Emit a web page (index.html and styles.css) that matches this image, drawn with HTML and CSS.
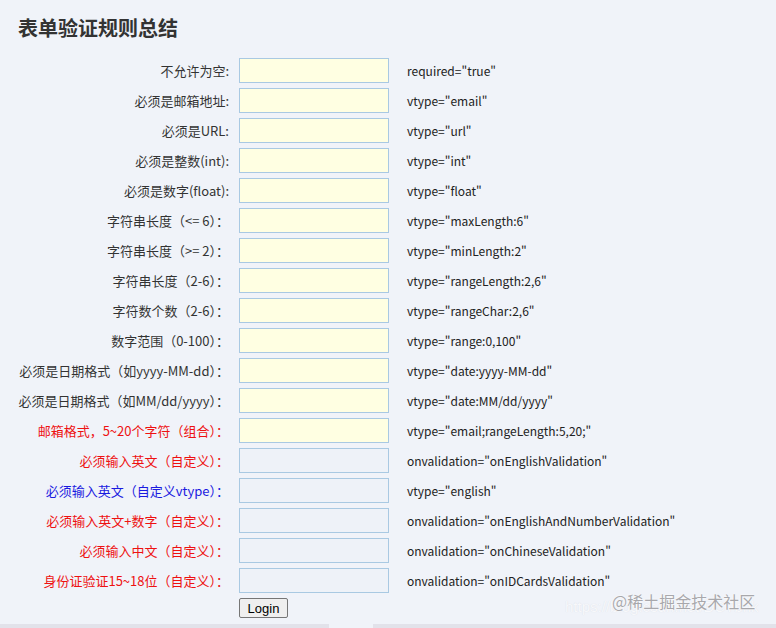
FILE: index.html
```html
<!DOCTYPE html>
<html lang="zh-CN">
<head>
<meta charset="utf-8">
<title>表单验证规则总结</title>
<link rel="stylesheet" href="styles.css">
</head>
<body>
<div class="page">
  <h2 class="title">表单验证规则总结</h2>
  <form class="form">
    <label class="lbl">不允许为空:</label><span class="inp"></span><span class="rule">required="true"</span>
    <label class="lbl">必须是邮箱地址:</label><span class="inp"></span><span class="rule">vtype="email"</span>
    <label class="lbl">必须是URL:</label><span class="inp"></span><span class="rule">vtype="url"</span>
    <label class="lbl">必须是整数(int):</label><span class="inp"></span><span class="rule">vtype="int"</span>
    <label class="lbl">必须是数字(float):</label><span class="inp"></span><span class="rule">vtype="float"</span>
    <label class="lbl">字符串长度（&lt;= 6）：</label><span class="inp"></span><span class="rule">vtype="maxLength:6"</span>
    <label class="lbl">字符串长度（&gt;= 2）：</label><span class="inp"></span><span class="rule">vtype="minLength:2"</span>
    <label class="lbl">字符串长度（2-6）：</label><span class="inp"></span><span class="rule">vtype="rangeLength:2,6"</span>
    <label class="lbl">字符数个数（2-6）：</label><span class="inp"></span><span class="rule">vtype="rangeChar:2,6"</span>
    <label class="lbl">数字范围（0-100）：</label><span class="inp"></span><span class="rule">vtype="range:0,100"</span>
    <label class="lbl">必须是日期格式（如yyyy-MM-dd）：</label><span class="inp"></span><span class="rule">vtype="date:yyyy-MM-dd"</span>
    <label class="lbl">必须是日期格式（如MM/dd/yyyy）：</label><span class="inp"></span><span class="rule">vtype="date:MM/dd/yyyy"</span>
    <label class="lbl red">邮箱格式，5~20个字符（组合）：</label><span class="inp"></span><span class="rule">vtype="email;rangeLength:5,20;"</span>
    <label class="lbl red">必须输入英文（自定义）：</label><span class="inp plain"></span><span class="rule">onvalidation="onEnglishValidation"</span>
    <label class="lbl blue">必须输入英文（自定义vtype）：</label><span class="inp plain"></span><span class="rule">vtype="english"</span>
    <label class="lbl red">必须输入英文+数字（自定义）：</label><span class="inp plain"></span><span class="rule">onvalidation="onEnglishAndNumberValidation"</span>
    <label class="lbl red">必须输入中文（自定义）：</label><span class="inp plain"></span><span class="rule">onvalidation="onChineseValidation"</span>
    <label class="lbl red">身份证验证15~18位（自定义）：</label><span class="inp plain"></span><span class="rule">onvalidation="onIDCardsValidation"</span>
    <span class="lbl"></span><span class="btncell"><button type="button" class="btn">Login</button></span><span class="rule"></span>
  </form>
  <div class="watermark">
    <span class="wm-url">https://blog.csdn.net/DCTbnk</span>
    <span class="wm-text">@稀土掘金技术社区</span>
  </div>
  <div class="footer">
    <span class="seg seg-a"></span>
    <span class="seg seg-b"></span>
  </div>
</div>
</body>
</html>
```
FILE: styles.css
```css
html, body {
  margin: 0;
  padding: 0;
  background: #f0f3f9;
}
body {
  font-family: "Noto Sans CJK SC", "Noto Sans", sans-serif;
  font-size: 13px;
  color: #333;
  width: 776px;
  height: 628px;
  overflow: hidden;
}
.page {
  position: relative;
  height: 628px;
  display: flex;
  flex-direction: column;
}
.title {
  margin: 0;
  padding: 13px 0 0 18px;
  height: 58px;
  box-sizing: border-box;
  font-size: 20px;
  line-height: 30px;
  font-weight: bold;
  color: #333;
}
.form {
  display: grid;
  grid-template-columns: 230px 150px 1fr;
  grid-auto-rows: 25px;
  row-gap: 5px;
  column-gap: 9px;
}
.lbl {
  text-align: right;
  line-height: 25px;
  white-space: nowrap;
  padding-right: 1px;
}
.red { color: #ee1111; }
.blue { color: #1a1ae0; }
.inp {
  display: block;
  height: 25px;
  box-sizing: border-box;
  border: 1px solid #a9c9e2;
  background: #ffffe2;
}
.inp.plain {
  background: #eef2f8;
}
.rule {
  padding-left: 9px;
  font-size: 12px;
  line-height: 25px;
  white-space: nowrap;
  color: #222;
}
.btncell {
  padding-top: 0;
}
.btn {
  display: block;
  margin: 0;
  width: 49px;
  height: 20px;
  padding: 0;
  font-family: "Liberation Sans", Arial, sans-serif;
  font-size: 13px;
  color: #000;
  background: #efefef;
  border: 1px solid #767676;
  border-radius: 2px;
}
.watermark {
  position: absolute;
  left: 563px;
  top: 589px;
  width: 200px;
  height: 30px;
}
.wm-url {
  position: absolute;
  left: 2px;
  top: 9px;
  font-family: "Liberation Sans", Arial, sans-serif;
  font-size: 15px;
  color: #f7f8fb;
  text-shadow: 0 0 1px #d8dce4;
  white-space: nowrap;
}
.wm-text {
  position: absolute;
  left: 49px;
  top: 0;
  font-size: 16px;
  color: #a8a8ac;
  text-shadow: 0 0 2px #fff, 0 0 1px #fff;
  white-space: nowrap;
}
.footer {
  margin-top: auto;
  display: flex;
  height: 4px;
}
.seg {
  display: block;
  height: 4px;
  background: #e2e2ea;
}
.seg-a { width: 329px; }
.seg-b { flex: 1; margin-left: 44px; }
```
